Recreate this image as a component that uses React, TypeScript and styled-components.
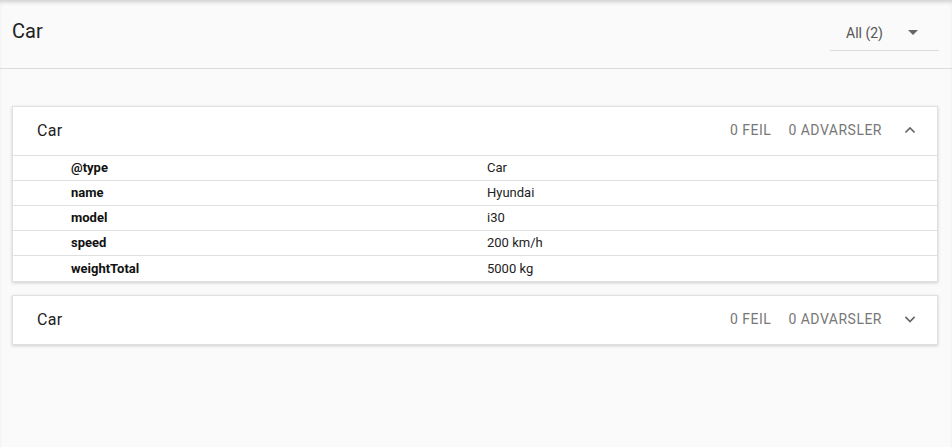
import React from 'react';
import styled, { createGlobalStyle } from 'styled-components';

const GlobalStyle = createGlobalStyle`
  html, body {
    margin: 0;
    padding: 0;
    background: #fafafa;
    font-family: Roboto, 'Liberation Sans', sans-serif;
    color: #212121;
  }
`;

const Page = styled.div`
  min-height: 447px;
  box-shadow: inset 0 4px 4px -2px rgba(0, 0, 0, 0.18);
`;

const TopBar = styled.header`
  display: flex;
  justify-content: space-between;
  align-items: flex-start;
  height: 69px;
  padding: 0 13px 0 12px;
  border-bottom: 1px solid #dcdcdc;
  box-sizing: border-box;
`;

const Title = styled.h1`
  margin: 19px 0 0;
  font-size: 20px;
  line-height: 24px;
  font-weight: 400;
  color: #222;
`;

const Select = styled.div`
  display: flex;
  align-items: center;
  justify-content: space-between;
  width: 109px;
  height: 33px;
  margin-top: 18px;
  box-sizing: border-box;
  padding: 0 21px 3px 16px;
  border-bottom: 1px solid #dcdcdc;
  font-size: 14px;
  color: #555;
`;

const Caret = styled.span`
  width: 0;
  height: 0;
  border-left: 5px solid transparent;
  border-right: 5px solid transparent;
  border-top: 5px solid #666;
`;

const List = styled.main`
  display: flex;
  flex-direction: column;
  gap: 13px;
  padding: 37px 14px 0 12px;
`;

const Card = styled.section`
  background: #fff;
  border: 1px solid #e0e0e0;
  box-shadow: 0 1px 3px rgba(0, 0, 0, 0.18);
`;

const CardHead = styled.div`
  display: flex;
  align-items: center;
  height: 48px;
  box-sizing: border-box;
  padding: 0 17px 2px 24px;
`;

const CardTitle = styled.span`
  flex: 1;
  font-size: 16px;
  color: #222;
  letter-spacing: 0.3px;
`;

const Count = styled.span`
  font-size: 14px;
  color: #777;
  letter-spacing: 0.5px;
  text-transform: uppercase;
  margin-left: 17px;
`;

const Chevron = styled.svg`
  margin-left: 18px;
  width: 20px;
  height: 20px;
`;

const Table = styled.div`
  display: grid;
  grid-template-columns: 1fr 1fr;
  border-top: 1px solid #e0e0e0;
`;

const Cell = styled.div<{ $key?: boolean }>`
  height: 25px;
  display: flex;
  align-items: center;
  box-sizing: border-box;
  padding-bottom: 1px;
  font-size: 13px;
  padding-left: ${p => (p.$key ? '58px' : '12px')};
  font-weight: ${p => (p.$key ? 700 : 400)};
  color: ${p => (p.$key ? '#111' : '#222')};
  border-bottom: 1px solid #e0e0e0;
  &:nth-last-child(-n + 2) {
    border-bottom: none;
  }
`;

const rows: [string, string][] = [
  ['@type', 'Car'],
  ['name', 'Hyundai'],
  ['model', 'i30'],
  ['speed', '200 km/h'],
  ['weightTotal', '5000 kg'],
];

const CarCard: React.FC<{ open?: boolean }> = ({ open }) => (
  <Card>
    <CardHead>
      <CardTitle>Car</CardTitle>
      <Count>0 Feil</Count>
      <Count>0 Advarsler</Count>
      <Chevron viewBox="0 0 24 24">
        <path
          d={open ? 'M6.5 15l5.5-5.5 5.5 5.5' : 'M6.5 9.5l5.5 5.5 5.5-5.5'}
          fill="none"
          stroke="#666"
          strokeWidth="2"
        />
      </Chevron>
    </CardHead>
    {open && (
      <Table>
        {rows.map(([k, v]) => (
          <React.Fragment key={k}>
            <Cell $key>{k}</Cell>
            <Cell>{v}</Cell>
          </React.Fragment>
        ))}
      </Table>
    )}
  </Card>
);

const App: React.FC = () => (
  <Page>
    <GlobalStyle />
    <TopBar>
      <Title>Car</Title>
      <Select>
        All (2)
        <Caret />
      </Select>
    </TopBar>
    <List>
      <CarCard open />
      <CarCard />
    </List>
  </Page>
);

export default App;
